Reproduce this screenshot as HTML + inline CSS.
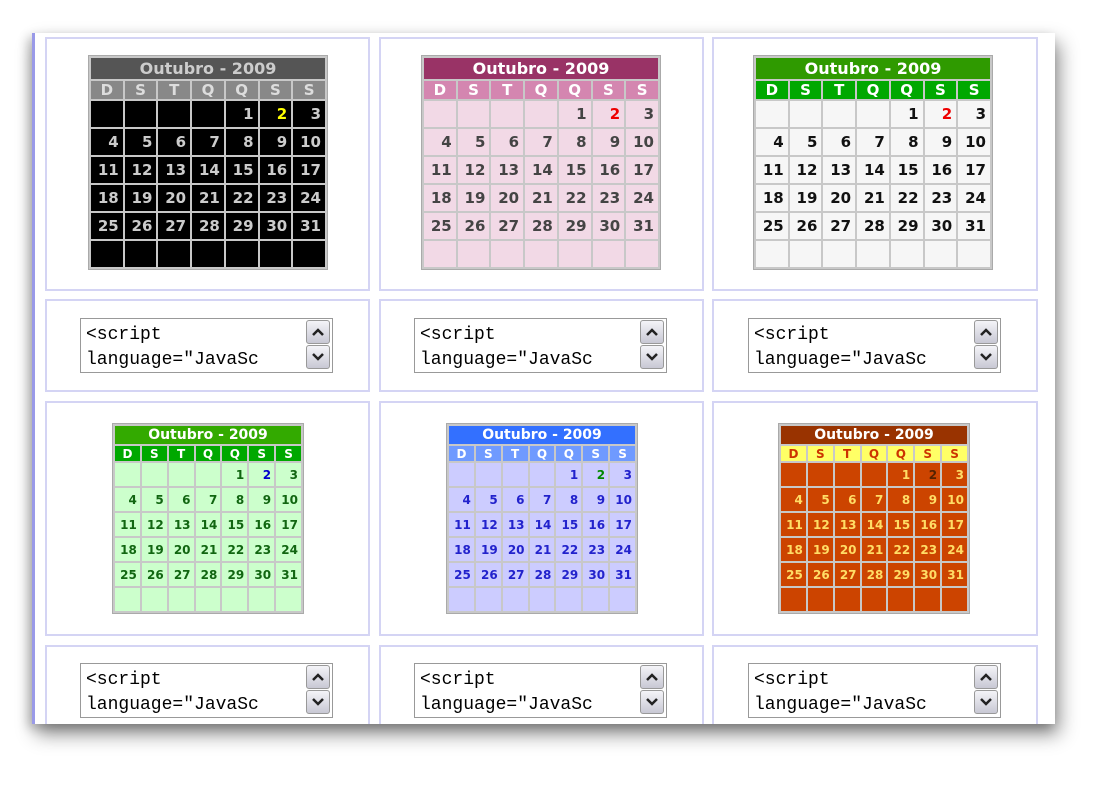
<!DOCTYPE html><html><head><meta charset="utf-8"><style>
body{margin:0;width:1116px;height:790px;background:#fff;position:relative;overflow:hidden;font-family:"DejaVu Sans","Liberation Sans",sans-serif}
#page{position:absolute;left:32px;top:33px;width:1023px;height:691px;background:#fff;box-shadow:4px 10px 18px rgba(0,0,0,.45),-4px 4px 10px rgba(0,0,0,.2);border-left:3px solid #9a9ae8;box-sizing:border-box}
.box{position:absolute;border:2px solid #d4d4f4;box-sizing:border-box;background:#fff}
table{position:absolute;border-collapse:separate;background:#c8c8c8;border:1px solid #aaa}
table td{padding:0 4px 0 0;text-align:right;font-weight:bold}
table tr.t td{text-align:center;padding:0}
table tr.h td{text-align:center;padding:0}
.big{width:240px;height:215px;border-spacing:2px;font-size:15px}
.big tr.t td{height:21px;font-size:16px}.big tr.h td{height:18px;font-size:15px}.big tr.d td{height:26px}
.sm{width:192px;height:191px;border-spacing:2px;font-size:12px}
.sm tr.t td{height:17px;font-size:14px}.sm tr.h td{height:15px}.sm tr.d td{height:22px}
.sm td{padding-right:3px}
.c1 .t td{background:#555;color:#ccc}.c1 .h td{background:#888;color:#ddd}.c1 .d td{background:#000;color:#ccc}.c1 b{color:#ff0}
.c2 .t td{background:#993366;color:#fff}.c2 .h td{background:#d486b0;color:#fff}.c2 .d td{background:#f2d9e6;color:#444}.c2 b{color:#e00}
.c3 .t td{background:#2f9a00;color:#fff}.c3 .h td{background:#00a800;color:#fff}.c3 .d td{background:#f6f6f6;color:#111}.c3 b{color:#e00}
.c4 .t td{background:#33aa00;color:#fff}.c4 .h td{background:#00a800;color:#fff}.c4 .d td{background:#ccffcc;color:#116611}.c4 b{color:#00c}
.c5 .t td{background:#3370ff;color:#fff}.c5 .h td{background:#6f9aff;color:#fff}.c5 .d td{background:#ccccff;color:#2222cc}.c5 b{color:#080}
.c6 .t td{background:#993300;color:#fff}.c6 .h td{background:#ffff66;color:#cc3300}.c6 .d td{background:#cc4400;color:#ffdd66}.c6 b{color:#552200}
.ta{position:absolute;width:253px;height:55px;border:1px solid #999;box-sizing:border-box;background:#fff;font-family:"Liberation Mono",monospace;font-size:18px;line-height:25px;padding:4px 0 0 5px;color:#000;white-space:pre;overflow:hidden}
.ta .sb{position:absolute;right:1px;top:1px;width:25px;height:51px}
.ta .btn{width:24px;height:24px;border:1px solid #999;border-radius:3px;background:linear-gradient(#f4f4f8,#c8c8d4);margin-bottom:1px;box-sizing:border-box;position:relative}
.ta .btn svg{position:absolute;left:5px;top:6px}
</style></head><body>
<div id="page"></div>

<div class="box" style="left:45px;top:37px;width:325px;height:254px"></div>
<div class="box" style="left:379px;top:37px;width:325px;height:254px"></div>
<div class="box" style="left:712px;top:37px;width:326px;height:254px"></div>
<div class="box" style="left:45px;top:299px;width:325px;height:93px"></div>
<div class="box" style="left:379px;top:299px;width:325px;height:93px"></div>
<div class="box" style="left:712px;top:299px;width:326px;height:93px"></div>
<div class="box" style="left:45px;top:401px;width:325px;height:235px"></div>
<div class="box" style="left:379px;top:401px;width:325px;height:235px"></div>
<div class="box" style="left:712px;top:401px;width:326px;height:235px"></div>
<div class="box" style="left:45px;top:645px;width:325px;height:79px;border-bottom:none"></div>
<div class="box" style="left:379px;top:645px;width:325px;height:79px;border-bottom:none"></div>
<div class="box" style="left:712px;top:645px;width:326px;height:79px;border-bottom:none"></div>

<table class="big c1" style="left:88px;top:55px">
<tr class="t"><td colspan="7">Outubro - 2009</td></tr>
<tr class="h"><td>D</td><td>S</td><td>T</td><td>Q</td><td>Q</td><td>S</td><td>S</td></tr>
<tr class="d"><td></td><td></td><td></td><td></td><td>1</td><td><b>2</b></td><td>3</td></tr>
<tr class="d"><td>4</td><td>5</td><td>6</td><td>7</td><td>8</td><td>9</td><td>10</td></tr>
<tr class="d"><td>11</td><td>12</td><td>13</td><td>14</td><td>15</td><td>16</td><td>17</td></tr>
<tr class="d"><td>18</td><td>19</td><td>20</td><td>21</td><td>22</td><td>23</td><td>24</td></tr>
<tr class="d"><td>25</td><td>26</td><td>27</td><td>28</td><td>29</td><td>30</td><td>31</td></tr>
<tr class="d"><td></td><td></td><td></td><td></td><td></td><td></td><td></td></tr>
</table>
<table class="big c2" style="left:421px;top:55px">
<tr class="t"><td colspan="7">Outubro - 2009</td></tr>
<tr class="h"><td>D</td><td>S</td><td>T</td><td>Q</td><td>Q</td><td>S</td><td>S</td></tr>
<tr class="d"><td></td><td></td><td></td><td></td><td>1</td><td><b>2</b></td><td>3</td></tr>
<tr class="d"><td>4</td><td>5</td><td>6</td><td>7</td><td>8</td><td>9</td><td>10</td></tr>
<tr class="d"><td>11</td><td>12</td><td>13</td><td>14</td><td>15</td><td>16</td><td>17</td></tr>
<tr class="d"><td>18</td><td>19</td><td>20</td><td>21</td><td>22</td><td>23</td><td>24</td></tr>
<tr class="d"><td>25</td><td>26</td><td>27</td><td>28</td><td>29</td><td>30</td><td>31</td></tr>
<tr class="d"><td></td><td></td><td></td><td></td><td></td><td></td><td></td></tr>
</table>
<table class="big c3" style="left:753px;top:55px">
<tr class="t"><td colspan="7">Outubro - 2009</td></tr>
<tr class="h"><td>D</td><td>S</td><td>T</td><td>Q</td><td>Q</td><td>S</td><td>S</td></tr>
<tr class="d"><td></td><td></td><td></td><td></td><td>1</td><td><b>2</b></td><td>3</td></tr>
<tr class="d"><td>4</td><td>5</td><td>6</td><td>7</td><td>8</td><td>9</td><td>10</td></tr>
<tr class="d"><td>11</td><td>12</td><td>13</td><td>14</td><td>15</td><td>16</td><td>17</td></tr>
<tr class="d"><td>18</td><td>19</td><td>20</td><td>21</td><td>22</td><td>23</td><td>24</td></tr>
<tr class="d"><td>25</td><td>26</td><td>27</td><td>28</td><td>29</td><td>30</td><td>31</td></tr>
<tr class="d"><td></td><td></td><td></td><td></td><td></td><td></td><td></td></tr>
</table>

<table class="sm c4" style="left:112px;top:423px">
<tr class="t"><td colspan="7">Outubro - 2009</td></tr>
<tr class="h"><td>D</td><td>S</td><td>T</td><td>Q</td><td>Q</td><td>S</td><td>S</td></tr>
<tr class="d"><td></td><td></td><td></td><td></td><td>1</td><td><b>2</b></td><td>3</td></tr>
<tr class="d"><td>4</td><td>5</td><td>6</td><td>7</td><td>8</td><td>9</td><td>10</td></tr>
<tr class="d"><td>11</td><td>12</td><td>13</td><td>14</td><td>15</td><td>16</td><td>17</td></tr>
<tr class="d"><td>18</td><td>19</td><td>20</td><td>21</td><td>22</td><td>23</td><td>24</td></tr>
<tr class="d"><td>25</td><td>26</td><td>27</td><td>28</td><td>29</td><td>30</td><td>31</td></tr>
<tr class="d"><td></td><td></td><td></td><td></td><td></td><td></td><td></td></tr>
</table>
<table class="sm c5" style="left:446px;top:423px">
<tr class="t"><td colspan="7">Outubro - 2009</td></tr>
<tr class="h"><td>D</td><td>S</td><td>T</td><td>Q</td><td>Q</td><td>S</td><td>S</td></tr>
<tr class="d"><td></td><td></td><td></td><td></td><td>1</td><td><b>2</b></td><td>3</td></tr>
<tr class="d"><td>4</td><td>5</td><td>6</td><td>7</td><td>8</td><td>9</td><td>10</td></tr>
<tr class="d"><td>11</td><td>12</td><td>13</td><td>14</td><td>15</td><td>16</td><td>17</td></tr>
<tr class="d"><td>18</td><td>19</td><td>20</td><td>21</td><td>22</td><td>23</td><td>24</td></tr>
<tr class="d"><td>25</td><td>26</td><td>27</td><td>28</td><td>29</td><td>30</td><td>31</td></tr>
<tr class="d"><td></td><td></td><td></td><td></td><td></td><td></td><td></td></tr>
</table>
<table class="sm c6" style="left:778px;top:423px">
<tr class="t"><td colspan="7">Outubro - 2009</td></tr>
<tr class="h"><td>D</td><td>S</td><td>T</td><td>Q</td><td>Q</td><td>S</td><td>S</td></tr>
<tr class="d"><td></td><td></td><td></td><td></td><td>1</td><td><b>2</b></td><td>3</td></tr>
<tr class="d"><td>4</td><td>5</td><td>6</td><td>7</td><td>8</td><td>9</td><td>10</td></tr>
<tr class="d"><td>11</td><td>12</td><td>13</td><td>14</td><td>15</td><td>16</td><td>17</td></tr>
<tr class="d"><td>18</td><td>19</td><td>20</td><td>21</td><td>22</td><td>23</td><td>24</td></tr>
<tr class="d"><td>25</td><td>26</td><td>27</td><td>28</td><td>29</td><td>30</td><td>31</td></tr>
<tr class="d"><td></td><td></td><td></td><td></td><td></td><td></td><td></td></tr>
</table>

<div class="ta" style="left:80px;top:318px">&lt;script
language="JavaSc<div class="sb"><div class="btn"><svg width="12" height="10"><path d="M1 8 L6 3 L11 8" stroke="#222" stroke-width="2.5" fill="none"/></svg></div><div class="btn"><svg width="12" height="10"><path d="M1 2 L6 7 L11 2" stroke="#222" stroke-width="2.5" fill="none"/></svg></div></div></div>
<div class="ta" style="left:414px;top:318px">&lt;script
language="JavaSc<div class="sb"><div class="btn"><svg width="12" height="10"><path d="M1 8 L6 3 L11 8" stroke="#222" stroke-width="2.5" fill="none"/></svg></div><div class="btn"><svg width="12" height="10"><path d="M1 2 L6 7 L11 2" stroke="#222" stroke-width="2.5" fill="none"/></svg></div></div></div>
<div class="ta" style="left:748px;top:318px">&lt;script
language="JavaSc<div class="sb"><div class="btn"><svg width="12" height="10"><path d="M1 8 L6 3 L11 8" stroke="#222" stroke-width="2.5" fill="none"/></svg></div><div class="btn"><svg width="12" height="10"><path d="M1 2 L6 7 L11 2" stroke="#222" stroke-width="2.5" fill="none"/></svg></div></div></div>
<div class="ta" style="left:80px;top:663px">&lt;script
language="JavaSc<div class="sb"><div class="btn"><svg width="12" height="10"><path d="M1 8 L6 3 L11 8" stroke="#222" stroke-width="2.5" fill="none"/></svg></div><div class="btn"><svg width="12" height="10"><path d="M1 2 L6 7 L11 2" stroke="#222" stroke-width="2.5" fill="none"/></svg></div></div></div>
<div class="ta" style="left:414px;top:663px">&lt;script
language="JavaSc<div class="sb"><div class="btn"><svg width="12" height="10"><path d="M1 8 L6 3 L11 8" stroke="#222" stroke-width="2.5" fill="none"/></svg></div><div class="btn"><svg width="12" height="10"><path d="M1 2 L6 7 L11 2" stroke="#222" stroke-width="2.5" fill="none"/></svg></div></div></div>
<div class="ta" style="left:748px;top:663px">&lt;script
language="JavaSc<div class="sb"><div class="btn"><svg width="12" height="10"><path d="M1 8 L6 3 L11 8" stroke="#222" stroke-width="2.5" fill="none"/></svg></div><div class="btn"><svg width="12" height="10"><path d="M1 2 L6 7 L11 2" stroke="#222" stroke-width="2.5" fill="none"/></svg></div></div></div>
</body></html>
